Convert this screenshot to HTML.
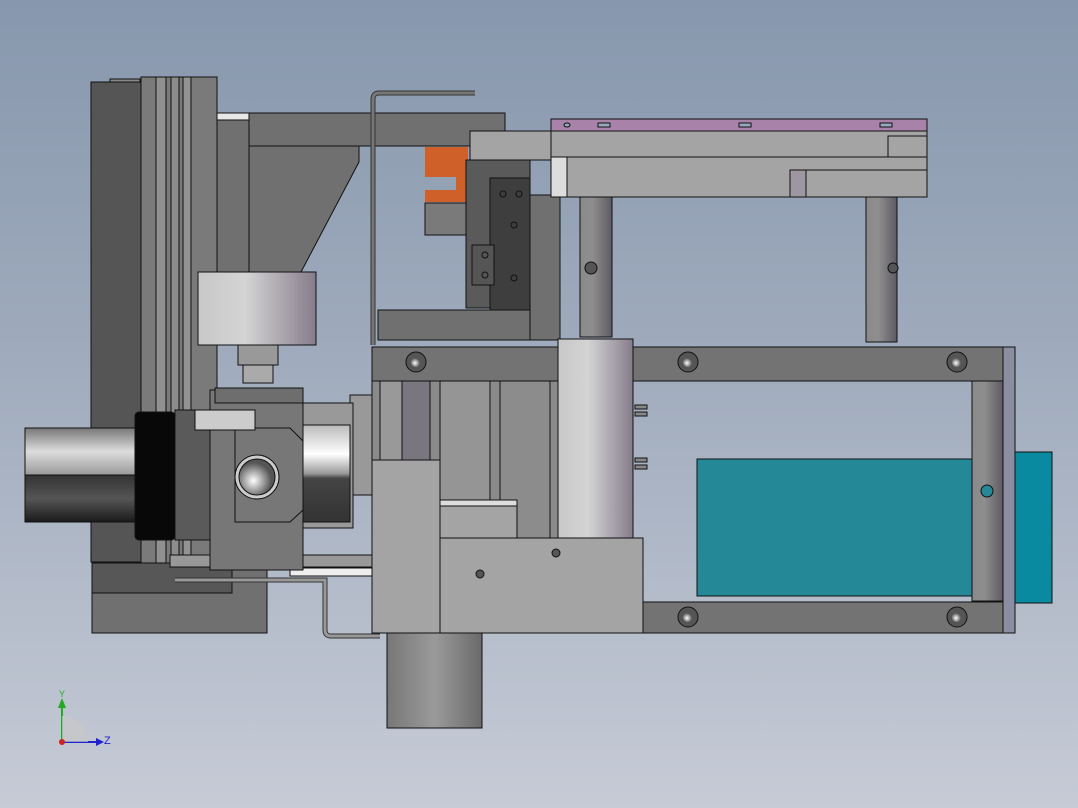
<!DOCTYPE html>
<html><head><meta charset="utf-8"><style>
html,body{margin:0;padding:0;width:1078px;height:808px;overflow:hidden}
body{background:linear-gradient(#8797ad,#a3aebf 50%,#c6cbd6)}
svg{position:absolute;left:0;top:0}
text{font-family:"Liberation Sans",sans-serif}
</style></head><body>
<svg width="1078" height="808" viewBox="0 0 1078 808">
<defs>
<linearGradient id="cyl" x1="0" x2="1"><stop offset="0" stop-color="#c8c8c8"/><stop offset=".4" stop-color="#d4d4d4"/><stop offset=".8" stop-color="#a09aa4"/><stop offset="1" stop-color="#857c8a"/></linearGradient>
<linearGradient id="post" x1="0" x2="1"><stop offset="0" stop-color="#8a8a8a"/><stop offset=".4" stop-color="#8e8e8e"/><stop offset="1" stop-color="#5e5a62"/></linearGradient>
<linearGradient id="lensT" x1="0" y1="0" x2="0" y2="1"><stop offset="0" stop-color="#777"/><stop offset=".5" stop-color="#ddd"/><stop offset="1" stop-color="#999"/></linearGradient>
<linearGradient id="lensB" x1="0" y1="0" x2="0" y2="1"><stop offset="0" stop-color="#333"/><stop offset=".5" stop-color="#555"/><stop offset="1" stop-color="#1a1a1a"/></linearGradient>
<linearGradient id="wcyl" x1="0" y1="0" x2="0" y2="1"><stop offset="0" stop-color="#bbb"/><stop offset=".3" stop-color="#fff"/><stop offset=".5" stop-color="#999"/><stop offset=".55" stop-color="#444"/><stop offset="1" stop-color="#333"/></linearGradient>
<linearGradient id="bcyl" x1="0" x2="1"><stop offset="0" stop-color="#777"/><stop offset=".5" stop-color="#9a9a9a"/><stop offset="1" stop-color="#6a6a6a"/></linearGradient>
<radialGradient id="knob" cx=".4" cy=".6"><stop offset="0" stop-color="#fff"/><stop offset=".6" stop-color="#999"/><stop offset="1" stop-color="#555"/></radialGradient>
</defs>
<g stroke="#111" stroke-width="1">
<!-- left column -->
<rect x="110" y="79" width="30" height="6" fill="#888"/>
<rect x="91" y="82" width="50" height="480" fill="#555"/>
<rect x="141" y="77" width="76" height="520" fill="#7a7a7a"/>
<rect x="156" y="77" width="10" height="520" fill="#909090"/>
<rect x="171" y="77" width="8" height="520" fill="#8c8c8c"/>
<rect x="183" y="77" width="8" height="520" fill="#939393"/>
<rect x="92" y="563" width="175" height="70" fill="#707070"/>
<rect x="92" y="563" width="140" height="30" fill="#575757"/>
<!-- beam and gusset -->
<rect x="217" y="113" width="32" height="7" fill="#e8e8e8"/>
<rect x="217" y="120" width="32" height="175" fill="#707070"/>
<rect x="249" y="113" width="256" height="33" fill="#707070"/>
<polygon points="249,146 359,146 359,162 301,272 249,272" fill="#707070"/>
<!-- wire frame -->
<path d="M475,93 H379 Q373,93 373,99 V345" fill="none" stroke="#333" stroke-width="5"/>
<path d="M475,93 H379 Q373,93 373,99 V345" fill="none" stroke="#777" stroke-width="3"/>
<rect x="378" y="310" width="152" height="30" fill="#707070"/>
<!-- orange + gripper -->
<rect x="425" y="147" width="43" height="30" fill="#d0602a" stroke="none"/>
<rect x="456" y="176" width="12" height="14" fill="#d0602a" stroke="none"/>
<rect x="425" y="190" width="43" height="12" fill="#d0602a" stroke="none"/>
<rect x="425" y="203" width="43" height="32" fill="#7a7a7a"/>
<rect x="470" y="131" width="90" height="29" fill="#a4a4a4"/>
<rect x="466" y="160" width="64" height="148" fill="#5a5a5a"/>
<rect x="490" y="178" width="40" height="132" fill="#3e3e3e"/>
<rect x="472" y="245" width="22" height="40" fill="#555"/>
<rect x="530" y="195" width="30" height="145" fill="#707070"/>
<g fill="none"><circle cx="503" cy="194" r="3"/><circle cx="519" cy="194" r="3"/><circle cx="514" cy="225" r="3"/><circle cx="514" cy="278" r="3"/><circle cx="485" cy="255" r="3"/><circle cx="485" cy="275" r="3"/></g>
<!-- upper right frame -->
<rect x="551" y="119" width="376" height="12" fill="#a882a8"/>
<rect x="551" y="131" width="376" height="26" fill="#a4a4a4"/>
<rect x="551" y="157" width="376" height="40" fill="#a4a4a4"/>
<rect x="551" y="157" width="16" height="40" fill="#ddd"/>
<rect x="790" y="170" width="16" height="27" fill="#9e96a2"/>
<rect x="806" y="170" width="121" height="27" fill="#a4a4a4"/>
<rect x="888" y="136" width="39" height="21" fill="#a4a4a4"/>
<g fill="#98a8c0"><rect x="598" y="123" width="12" height="4"/><rect x="739" y="123" width="12" height="4"/><rect x="880" y="123" width="12" height="4"/><ellipse cx="567" cy="125" rx="3" ry="2"/></g>
<rect x="580" y="197" width="32" height="140" fill="url(#post)"/>
<rect x="866" y="197" width="31" height="145" fill="url(#post)"/>
<circle cx="591" cy="268" r="6" fill="#555"/><circle cx="893" cy="268" r="5" fill="#555"/>
<!-- main frame -->
<rect x="372" y="381" width="186" height="160" fill="#8a8a8a"/>
<rect x="380" y="381" width="22" height="160" fill="#999"/>
<rect x="402" y="381" width="28" height="160" fill="#7a7680"/>
<rect x="440" y="381" width="50" height="160" fill="#959595"/>
<rect x="500" y="381" width="50" height="160" fill="#8c8c8c"/>
<rect x="372" y="347" width="631" height="34" fill="#737373"/>
<rect x="643" y="602" width="360" height="31" fill="#737373"/>
<rect x="1003" y="347" width="12" height="286" fill="#8a8ea0"/>
<rect x="697" y="459" width="278" height="137" fill="#258896"/>
<rect x="1015" y="452" width="37" height="151" fill="#0a8aa0"/>
<rect x="972" y="381" width="31" height="220" fill="url(#post)"/>
<circle cx="987" cy="491" r="6" fill="#258896"/>
<rect x="558" y="339" width="75" height="202" fill="url(#cyl)"/>
<g fill="#888"><rect x="635" y="405" width="12" height="4"/><rect x="635" y="412" width="12" height="4"/><rect x="635" y="458" width="12" height="4"/><rect x="635" y="465" width="12" height="4"/></g>
<g fill="#555"><circle cx="416" cy="362" r="10"/><circle cx="688" cy="362" r="10"/><circle cx="957" cy="362" r="10"/><circle cx="688" cy="617" r="10"/><circle cx="957" cy="617" r="10"/></g>
<g fill="url(#knob)" stroke="none"><circle cx="416" cy="362" r="5"/><circle cx="688" cy="362" r="5"/><circle cx="957" cy="362" r="5"/><circle cx="688" cy="617" r="5"/><circle cx="957" cy="617" r="5"/></g>
<rect x="440" y="500" width="77" height="38" fill="#a4a4a4"/>
<rect x="440" y="500" width="77" height="6" fill="#ddd"/>
<rect x="372" y="460" width="68" height="173" fill="#a4a4a4"/>
<rect x="440" y="538" width="203" height="95" fill="#a4a4a4"/>
<circle cx="480" cy="574" r="4" fill="#555"/><circle cx="556" cy="553" r="4" fill="#555"/>
<rect x="387" y="633" width="95" height="95" fill="url(#bcyl)"/>
<!-- cylinder + valve -->
<rect x="198" y="272" width="118" height="73" fill="url(#cyl)"/>
<rect x="238" y="345" width="40" height="20" fill="#999"/>
<rect x="243" y="365" width="30" height="18" fill="#aaa"/>
<rect x="350" y="395" width="22" height="100" fill="#999"/>
<rect x="303" y="403" width="50" height="125" fill="#999"/>
<rect x="303" y="425" width="47" height="97" fill="url(#wcyl)"/>
<rect x="170" y="555" width="202" height="12" fill="#999"/>
<path d="M175,580 H325 V630 Q325,636 331,636 H380" fill="none" stroke="#333" stroke-width="5"/>
<path d="M175,580 H325 V630 Q325,636 331,636 H380" fill="none" stroke="#999" stroke-width="3"/>
<rect x="290" y="568" width="82" height="8" fill="#eee"/>
<rect x="210" y="390" width="93" height="180" fill="#777"/>
<rect x="215" y="388" width="88" height="15" fill="#6e6e6e"/>
<polygon points="235,428 290,428 303,441 303,510 290,522 235,522" fill="#777"/>
<circle cx="257" cy="477" r="22" fill="#ccc"/>
<circle cx="257" cy="477" r="18" fill="url(#knob)"/>
<rect x="175" y="410" width="35" height="130" fill="#5a5a5a"/>
<rect x="195" y="410" width="60" height="20" fill="#ccc"/>
<rect x="25" y="428" width="110" height="47" fill="url(#lensT)"/>
<rect x="25" y="475" width="110" height="47" fill="url(#lensB)"/>
<rect x="135" y="412" width="40" height="128" rx="4" fill="#080808"/>
</g>
<!-- axis triad -->
<g stroke-width="2">
<line x1="62" y1="742" x2="62" y2="705" stroke="#2a2"/><polygon points="58,708 66,708 62,698" fill="#2a2"/>
<line x1="62" y1="742" x2="98" y2="742" stroke="#22c"/><polygon points="96,738 96,746 104,742" fill="#22c"/>
<path d="M62,716 A26,26 0 0 1 88,742 L62,742 Z" fill="#c8c8c8" opacity=".7"/>
<circle cx="62" cy="742" r="3" fill="#c22"/>
</g>
<text x="59" y="697" font-size="9" fill="#2a2">Y</text>
<text x="104" y="744" font-size="11" fill="#22c">Z</text>
</svg>
</body></html>
